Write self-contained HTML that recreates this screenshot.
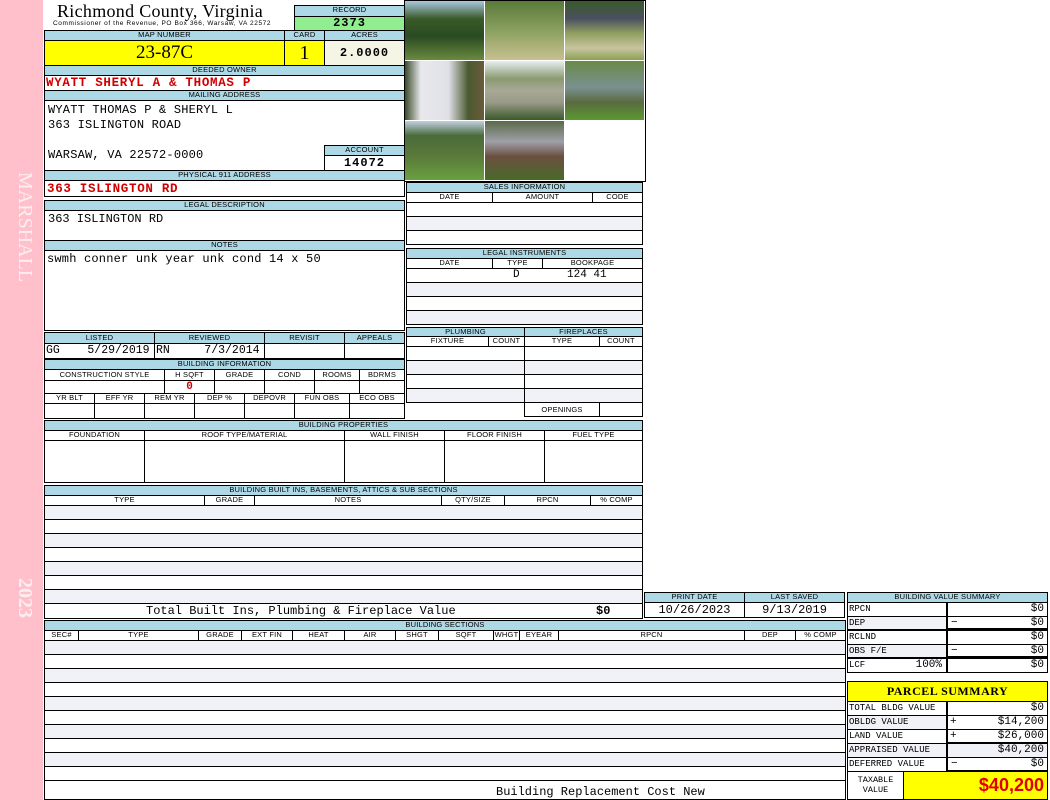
<!DOCTYPE html>
<html><head><meta charset="utf-8"><style>
*{margin:0;padding:0}
body{width:1050px;height:800px;background:#fff;position:relative;overflow:hidden;font-family:"Liberation Sans",sans-serif}
.a{position:absolute;box-sizing:border-box}
.c{position:absolute;box-sizing:border-box;border:1px solid #000;overflow:hidden;white-space:nowrap}
.h{background:#add8e6;font-size:7.5px;text-align:center;line-height:8px;letter-spacing:0.2px}
.k{font-size:7.5px;text-align:center;line-height:8px;background:#fff;letter-spacing:0.2px}
.m{font-family:"Liberation Mono",monospace}
.r{background:#f1f1f8}
.red{color:#d00000;font-weight:bold}
.rt{text-align:right;padding-right:3px}
.sm{font-family:"Liberation Mono",monospace;font-size:9px;line-height:12px;padding-left:1px}
</style></head><body>
<div class="a" style="left:0;top:0;width:43px;height:800px;background:#ffc0cb"></div>
<div class="a" style="left:8px;top:172px;width:30px;height:140px;"><div style="transform:rotate(90deg);transform-origin:0 0;position:absolute;left:28px;top:0;font:20px 'Liberation Serif',serif;color:#fbeef0;white-space:nowrap;letter-spacing:0px">MARSHALL</div></div>
<div class="a" style="left:8px;top:578px;width:30px;height:60px;"><div style="transform:rotate(90deg);transform-origin:0 0;position:absolute;left:28px;top:0;font:bold 20px 'Liberation Serif',serif;color:#fbeef0;white-space:nowrap">2023</div></div>

<div class="a" style="left:57px;top:1px;font:18px 'Liberation Serif',serif;white-space:nowrap;line-height:20px;letter-spacing:0.3px">Richmond County, Virginia</div>
<div class="a" style="left:53px;top:20px;font-size:6.5px;white-space:nowrap;line-height:8px;letter-spacing:0.6px">Commissioner of the Revenue, PO Box 366, Warsaw, VA 22572</div>

<div class="c h" style="left:294px;top:5px;width:111px;height:12px">RECORD</div>
<div class="c m" style="left:294px;top:16px;width:111px;height:15px;background:#90ee90;font-size:12px;font-weight:bold;text-align:center;line-height:13px;letter-spacing:1px">2373</div>

<div class="c h" style="left:44px;top:30px;width:241px;height:11px">MAP NUMBER</div>
<div class="c h" style="left:284px;top:30px;width:41px;height:11px">CARD</div>
<div class="c h" style="left:324px;top:30px;width:81px;height:11px">ACRES</div>
<div class="c" style="left:44px;top:40px;width:241px;height:26px;background:#ffff00;font:19px 'Liberation Serif',serif;text-align:center;line-height:24px">23-87C</div>
<div class="c" style="left:284px;top:40px;width:41px;height:26px;background:#ffff00;font:20px 'Liberation Serif',serif;text-align:center;line-height:24px">1</div>
<div class="c m" style="left:324px;top:40px;width:81px;height:26px;background:#f5f5e6;font-size:12px;font-weight:bold;text-align:center;line-height:24px;letter-spacing:1px">2.0000</div>

<div class="c h" style="left:44px;top:65px;width:361px;height:11px">DEEDED OWNER</div>
<div class="c m red" style="left:44px;top:75px;width:361px;height:16px;font-size:12.5px;line-height:15px;padding-left:1px;letter-spacing:0.7px">WYATT SHERYL A &amp; THOMAS P</div>
<div class="c h" style="left:44px;top:90px;width:361px;height:11px">MAILING ADDRESS</div>
<div class="c m" style="left:44px;top:100px;width:361px;height:71px;font-size:12px;line-height:15px;padding:2px 0 0 3px;white-space:pre;letter-spacing:0.2px">WYATT THOMAS P &amp; SHERYL L
363 ISLINGTON ROAD

WARSAW, VA 22572-0000</div>
<div class="c h" style="left:324px;top:145px;width:81px;height:11px">ACCOUNT</div>
<div class="c m" style="left:324px;top:155px;width:81px;height:16px;font-size:12px;font-weight:bold;text-align:center;line-height:14px;letter-spacing:1px">14072</div>
<div class="c h" style="left:44px;top:170px;width:361px;height:11px">PHYSICAL 911 ADDRESS</div>
<div class="c m red" style="left:44px;top:180px;width:361px;height:17px;font-size:12.5px;line-height:16px;padding-left:2px;letter-spacing:0.7px">363 ISLINGTON RD</div>

<div class="c h" style="left:44px;top:200px;width:361px;height:11px">LEGAL DESCRIPTION</div>
<div class="c m" style="left:44px;top:210px;width:361px;height:31px;font-size:12px;line-height:16px;padding-left:3px">363 ISLINGTON RD</div>
<div class="c h" style="left:44px;top:240px;width:361px;height:11px">NOTES</div>
<div class="c m" style="left:44px;top:250px;width:361px;height:81px;font-size:12px;line-height:17px;padding-left:2px;letter-spacing:0.2px">swmh conner unk year unk cond 14 x 50</div>

<!-- photos -->
<div class="c" style="left:404px;top:0;width:242px;height:182px;background:#fff"></div>
<div class="a" style="left:405px;top:1px;width:79px;height:59px;background:linear-gradient(180deg,#a8c8e0 0%,#3a5a2a 30%,#2a4a22 60%,#6a8a40 100%)"></div>
<div class="a" style="left:485px;top:1px;width:79px;height:59px;background:linear-gradient(180deg,#5a7a3a 0%,#8aa060 50%,#c8c090 100%)"></div>
<div class="a" style="left:565px;top:1px;width:79px;height:59px;background:linear-gradient(180deg,#3a5a2a 0%,#4a5060 30%,#90a060 55%,#c8c4a0 80%,#8aa050 100%)"></div>
<div class="a" style="left:405px;top:61px;width:79px;height:59px;background:linear-gradient(90deg,#3a4a2a 0%,#e8e8ec 20%,#e0e0e8 55%,#4a5a30 80%,#6a5a3a 100%)"></div>
<div class="a" style="left:485px;top:61px;width:79px;height:59px;background:linear-gradient(180deg,#e8eef0 0%,#8a9a70 30%,#a8a898 50%,#9a9a88 70%,#3a5a2a 100%)"></div>
<div class="a" style="left:565px;top:61px;width:79px;height:59px;background:linear-gradient(180deg,#6a8a4a 0%,#7a9090 45%,#5a6a40 70%,#5a9a30 100%)"></div>
<div class="a" style="left:405px;top:121px;width:79px;height:59px;background:linear-gradient(180deg,#c0d0e0 0%,#4a6a3a 25%,#5a7a3a 60%,#6aa040 100%)"></div>
<div class="a" style="left:485px;top:121px;width:79px;height:59px;background:linear-gradient(180deg,#5a6a4a 0%,#a0a0a8 35%,#6a5040 60%,#4a6a2a 100%)"></div>

<!-- sales -->
<div class="c h" style="left:406px;top:182px;width:237px;height:11px">SALES INFORMATION</div>
<div class="c k" style="left:406px;top:192px;width:87px;height:11px">DATE</div>
<div class="c k" style="left:492px;top:192px;width:101px;height:11px">AMOUNT</div>
<div class="c k" style="left:592px;top:192px;width:51px;height:11px">CODE</div>
<div class="c" style="left:406px;top:202px;width:237px;height:15px"></div>
<div class="c r" style="left:406px;top:216px;width:237px;height:15px"></div>
<div class="c" style="left:406px;top:230px;width:237px;height:15px"></div>

<div class="c h" style="left:406px;top:248px;width:237px;height:11px">LEGAL INSTRUMENTS</div>
<div class="c k" style="left:406px;top:258px;width:87px;height:11px">DATE</div>
<div class="c k" style="left:492px;top:258px;width:51px;height:11px">TYPE</div>
<div class="c k" style="left:542px;top:258px;width:101px;height:11px">BOOKPAGE</div>
<div class="c m" style="left:406px;top:268px;width:237px;height:15px;font-size:11px;line-height:13px"><span style="position:absolute;left:106px">D</span><span style="position:absolute;left:160px">124 41</span></div>
<div class="c r" style="left:406px;top:282px;width:237px;height:15px"></div>
<div class="c" style="left:406px;top:296px;width:237px;height:15px"></div>
<div class="c r" style="left:406px;top:310px;width:237px;height:15px"></div>

<div class="c h" style="left:406px;top:327px;width:119px;height:10px;line-height:8px">PLUMBING</div>
<div class="c h" style="left:524px;top:327px;width:119px;height:10px;line-height:8px">FIREPLACES</div>
<div class="c k" style="left:406px;top:336px;width:83px;height:11px">FIXTURE</div>
<div class="c k" style="left:488px;top:336px;width:37px;height:11px">COUNT</div>
<div class="c k" style="left:524px;top:336px;width:76px;height:11px">TYPE</div>
<div class="c k" style="left:599px;top:336px;width:44px;height:11px">COUNT</div>
<div class="c" style="left:406px;top:346px;width:119px;height:15px"></div>
<div class="c r" style="left:406px;top:360px;width:119px;height:15px"></div>
<div class="c" style="left:406px;top:374px;width:119px;height:15px"></div>
<div class="c r" style="left:406px;top:388px;width:119px;height:15px"></div>
<div class="c" style="left:524px;top:346px;width:119px;height:15px"></div>
<div class="c r" style="left:524px;top:360px;width:119px;height:15px"></div>
<div class="c" style="left:524px;top:374px;width:119px;height:15px"></div>
<div class="c r" style="left:524px;top:388px;width:119px;height:15px"></div>
<div class="c k" style="left:524px;top:402px;width:76px;height:15px;line-height:13px">OPENINGS</div>
<div class="c" style="left:599px;top:402px;width:44px;height:15px"></div>

<!-- listed -->
<div class="c h" style="left:44px;top:332px;width:111px;height:12px;line-height:10px">LISTED</div>
<div class="c h" style="left:154px;top:332px;width:111px;height:12px;line-height:10px">REVIEWED</div>
<div class="c h" style="left:264px;top:332px;width:81px;height:12px;line-height:10px">REVISIT</div>
<div class="c h" style="left:344px;top:332px;width:61px;height:12px;line-height:10px">APPEALS</div>
<div class="c m" style="left:44px;top:343px;width:111px;height:16px;font-size:11.5px;line-height:14px;padding-left:1px;white-space:pre">GG    5/29/2019</div>
<div class="c m" style="left:154px;top:343px;width:111px;height:16px;font-size:11.5px;line-height:14px;padding-left:1px;white-space:pre">RN     7/3/2014</div>
<div class="c" style="left:264px;top:343px;width:81px;height:16px"></div>
<div class="c" style="left:344px;top:343px;width:61px;height:16px"></div>

<div class="c h" style="left:44px;top:359px;width:361px;height:11px">BUILDING INFORMATION</div>
<div class="c k" style="left:44px;top:369px;width:121px;height:12px;line-height:10px">CONSTRUCTION STYLE</div>
<div class="c k" style="left:164px;top:369px;width:51px;height:12px;line-height:10px">H SQFT</div>
<div class="c k" style="left:214px;top:369px;width:51px;height:12px;line-height:10px">GRADE</div>
<div class="c k" style="left:264px;top:369px;width:51px;height:12px;line-height:10px">COND</div>
<div class="c k" style="left:314px;top:369px;width:46px;height:12px;line-height:10px">ROOMS</div>
<div class="c k" style="left:359px;top:369px;width:46px;height:12px;line-height:10px">BDRMS</div>
<div class="c" style="left:44px;top:380px;width:121px;height:14px"></div>
<div class="c m red" style="left:164px;top:380px;width:51px;height:14px;font-size:11px;line-height:13px;text-align:center">0</div>
<div class="c" style="left:214px;top:380px;width:51px;height:14px"></div>
<div class="c" style="left:264px;top:380px;width:51px;height:14px"></div>
<div class="c" style="left:314px;top:380px;width:46px;height:14px"></div>
<div class="c" style="left:359px;top:380px;width:46px;height:14px"></div>
<div class="c k" style="left:44px;top:393px;width:51px;height:11px">YR BLT</div>
<div class="c k" style="left:94px;top:393px;width:51px;height:11px">EFF YR</div>
<div class="c k" style="left:144px;top:393px;width:51px;height:11px">REM YR</div>
<div class="c k" style="left:194px;top:393px;width:51px;height:11px">DEP %</div>
<div class="c k" style="left:244px;top:393px;width:51px;height:11px">DEPOVR</div>
<div class="c k" style="left:294px;top:393px;width:56px;height:11px">FUN OBS</div>
<div class="c k" style="left:349px;top:393px;width:56px;height:11px">ECO OBS</div>
<div class="c" style="left:44px;top:403px;width:51px;height:16px"></div>
<div class="c" style="left:94px;top:403px;width:51px;height:16px"></div>
<div class="c" style="left:144px;top:403px;width:51px;height:16px"></div>
<div class="c" style="left:194px;top:403px;width:51px;height:16px"></div>
<div class="c" style="left:244px;top:403px;width:51px;height:16px"></div>
<div class="c" style="left:294px;top:403px;width:56px;height:16px"></div>
<div class="c" style="left:349px;top:403px;width:56px;height:16px"></div>

<!-- building properties -->
<div class="c h" style="left:44px;top:420px;width:599px;height:11px">BUILDING PROPERTIES</div>
<div class="c k" style="left:44px;top:430px;width:101px;height:11px">FOUNDATION</div>
<div class="c k" style="left:144px;top:430px;width:201px;height:11px">ROOF TYPE/MATERIAL</div>
<div class="c k" style="left:344px;top:430px;width:101px;height:11px">WALL FINISH</div>
<div class="c k" style="left:444px;top:430px;width:101px;height:11px">FLOOR FINISH</div>
<div class="c k" style="left:544px;top:430px;width:99px;height:11px">FUEL TYPE</div>
<div class="c" style="left:44px;top:440px;width:101px;height:43px"></div>
<div class="c" style="left:144px;top:440px;width:201px;height:43px"></div>
<div class="c" style="left:344px;top:440px;width:101px;height:43px"></div>
<div class="c" style="left:444px;top:440px;width:101px;height:43px"></div>
<div class="c" style="left:544px;top:440px;width:99px;height:43px"></div>

<!-- built ins -->
<div class="c h" style="left:44px;top:485px;width:599px;height:11px">BUILDING BUILT INS, BASEMENTS, ATTICS &amp; SUB SECTIONS</div>
<div class="c k" style="left:44px;top:495px;width:161px;height:11px">TYPE</div>
<div class="c k" style="left:204px;top:495px;width:51px;height:11px">GRADE</div>
<div class="c k" style="left:254px;top:495px;width:188px;height:11px">NOTES</div>
<div class="c k" style="left:441px;top:495px;width:64px;height:11px">QTY/SIZE</div>
<div class="c k" style="left:504px;top:495px;width:87px;height:11px">RPCN</div>
<div class="c k" style="left:590px;top:495px;width:53px;height:11px">% COMP</div>
<div class="c r" style="left:44px;top:505px;width:599px;height:15px"></div>
<div class="c" style="left:44px;top:519px;width:599px;height:15px"></div>
<div class="c r" style="left:44px;top:533px;width:599px;height:15px"></div>
<div class="c" style="left:44px;top:547px;width:599px;height:15px"></div>
<div class="c r" style="left:44px;top:561px;width:599px;height:15px"></div>
<div class="c" style="left:44px;top:575px;width:599px;height:15px"></div>
<div class="c r" style="left:44px;top:589px;width:599px;height:15px"></div>
<div class="c m" style="left:44px;top:603px;width:599px;height:16px;font-size:12px;line-height:15px"><span style="position:absolute;left:101px">Total Built Ins, Plumbing &amp; Fireplace Value</span><span style="position:absolute;left:551px;font-weight:bold">$0</span></div>

<div class="c h" style="left:644px;top:592px;width:101px;height:11px">PRINT DATE</div>
<div class="c h" style="left:744px;top:592px;width:101px;height:11px">LAST SAVED</div>
<div class="c m" style="left:644px;top:602px;width:101px;height:16px;font-size:12px;line-height:14px;text-align:center">10/26/2023</div>
<div class="c m" style="left:744px;top:602px;width:101px;height:16px;font-size:12px;line-height:14px;text-align:center">9/13/2019</div>

<!-- building sections -->
<div class="c h" style="left:44px;top:620px;width:802px;height:11px">BUILDING SECTIONS</div>
<div class="c k" style="left:44px;top:630px;width:35px;height:11px">SEC#</div>
<div class="c k" style="left:78px;top:630px;width:121px;height:11px">TYPE</div>
<div class="c k" style="left:198px;top:630px;width:44px;height:11px">GRADE</div>
<div class="c k" style="left:241px;top:630px;width:52px;height:11px">EXT FIN</div>
<div class="c k" style="left:292px;top:630px;width:53px;height:11px">HEAT</div>
<div class="c k" style="left:344px;top:630px;width:52px;height:11px">AIR</div>
<div class="c k" style="left:395px;top:630px;width:44px;height:11px">SHGT</div>
<div class="c k" style="left:438px;top:630px;width:56px;height:11px">SQFT</div>
<div class="c k" style="left:493px;top:630px;width:27px;height:11px">WHGT</div>
<div class="c k" style="left:519px;top:630px;width:40px;height:11px">EYEAR</div>
<div class="c k" style="left:558px;top:630px;width:187px;height:11px">RPCN</div>
<div class="c k" style="left:744px;top:630px;width:52px;height:11px">DEP</div>
<div class="c k" style="left:795px;top:630px;width:51px;height:11px">% COMP</div>
<div class="c r" style="left:44px;top:640px;width:802px;height:15px"></div>
<div class="c" style="left:44px;top:654px;width:802px;height:15px"></div>
<div class="c r" style="left:44px;top:668px;width:802px;height:15px"></div>
<div class="c" style="left:44px;top:682px;width:802px;height:15px"></div>
<div class="c r" style="left:44px;top:696px;width:802px;height:15px"></div>
<div class="c" style="left:44px;top:710px;width:802px;height:15px"></div>
<div class="c r" style="left:44px;top:724px;width:802px;height:15px"></div>
<div class="c" style="left:44px;top:738px;width:802px;height:15px"></div>
<div class="c r" style="left:44px;top:752px;width:802px;height:15px"></div>
<div class="c" style="left:44px;top:766px;width:802px;height:15px"></div>
<div class="c m" style="left:44px;top:780px;width:802px;height:20px;font-size:12px;line-height:22px"><span style="position:absolute;left:451px">Building Replacement Cost New</span></div>

<!-- value summary -->
<div class="c h" style="left:847px;top:592px;width:201px;height:11px">BUILDING VALUE SUMMARY</div>
<div class="c sm" style="left:847px;top:602px;width:101px;height:15px;border-right-width:2px">RPCN</div>
<div class="c sm rt" style="left:947px;top:602px;width:101px;height:15px;font-size:11px">$0</div>
<div class="c sm r" style="left:847px;top:616px;width:101px;height:15px;border-right-width:2px;border-bottom-width:2px">DEP</div>
<div class="c sm rt" style="left:947px;top:616px;width:101px;height:15px;font-size:11px;border-bottom-width:3px"><span style="position:absolute;left:3px">&minus;</span>$0</div>
<div class="c sm" style="left:847px;top:630px;width:101px;height:15px;border-right-width:2px">RCLND</div>
<div class="c sm rt" style="left:947px;top:630px;width:101px;height:15px;font-size:11px">$0</div>
<div class="c sm r" style="left:847px;top:644px;width:101px;height:15px;border-right-width:2px;border-bottom-width:2px">OBS F/E</div>
<div class="c sm rt" style="left:947px;top:644px;width:101px;height:15px;font-size:11px;border-bottom-width:3px"><span style="position:absolute;left:3px">&minus;</span>$0</div>
<div class="c sm" style="left:847px;top:658px;width:101px;height:15px;border-right-width:2px">LCF<span style="position:absolute;right:4px;font-size:11px">100%</span></div>
<div class="c sm rt" style="left:947px;top:658px;width:101px;height:15px;font-size:11px">$0</div>

<!-- parcel summary -->
<div class="c" style="left:847px;top:681px;width:201px;height:21px;background:#ffff00;font:bold 12px 'Liberation Serif',serif;text-align:center;line-height:19px;letter-spacing:0.5px">PARCEL SUMMARY</div>
<div class="c sm" style="left:847px;top:701px;width:101px;height:15px;border-right-width:2px">TOTAL BLDG VALUE</div>
<div class="c sm rt" style="left:947px;top:701px;width:101px;height:15px;font-size:11px">$0</div>
<div class="c sm r" style="left:847px;top:715px;width:101px;height:15px;border-right-width:2px">OBLDG VALUE</div>
<div class="c sm rt" style="left:947px;top:715px;width:101px;height:15px;font-size:11px"><span style="position:absolute;left:2px">+</span>$14,200</div>
<div class="c sm" style="left:847px;top:729px;width:101px;height:15px;border-right-width:2px">LAND VALUE</div>
<div class="c sm rt" style="left:947px;top:729px;width:101px;height:15px;font-size:11px;border-bottom-width:2px"><span style="position:absolute;left:2px">+</span>$26,000</div>
<div class="c sm r" style="left:847px;top:743px;width:101px;height:15px;border-right-width:2px">APPRAISED VALUE</div>
<div class="c sm rt r" style="left:947px;top:743px;width:101px;height:15px;font-size:11px">$40,200</div>
<div class="c sm" style="left:847px;top:757px;width:101px;height:15px;border-right-width:2px">DEFERRED VALUE</div>
<div class="c sm rt" style="left:947px;top:757px;width:101px;height:15px;font-size:11px;border-bottom-width:2px"><span style="position:absolute;left:3px">&minus;</span>$0</div>
<div class="c m" style="left:847px;top:771px;width:57px;height:29px;font-size:8.5px;line-height:10px;text-align:center;padding-top:3px;white-space:pre">TAXABLE
VALUE</div>
<div class="c" style="left:903px;top:771px;width:145px;height:29px;background:#ffff00;color:#e00000;font-weight:bold;font-size:18px;text-align:right;line-height:27px;padding-right:3px">$40,200</div>
</body></html>
